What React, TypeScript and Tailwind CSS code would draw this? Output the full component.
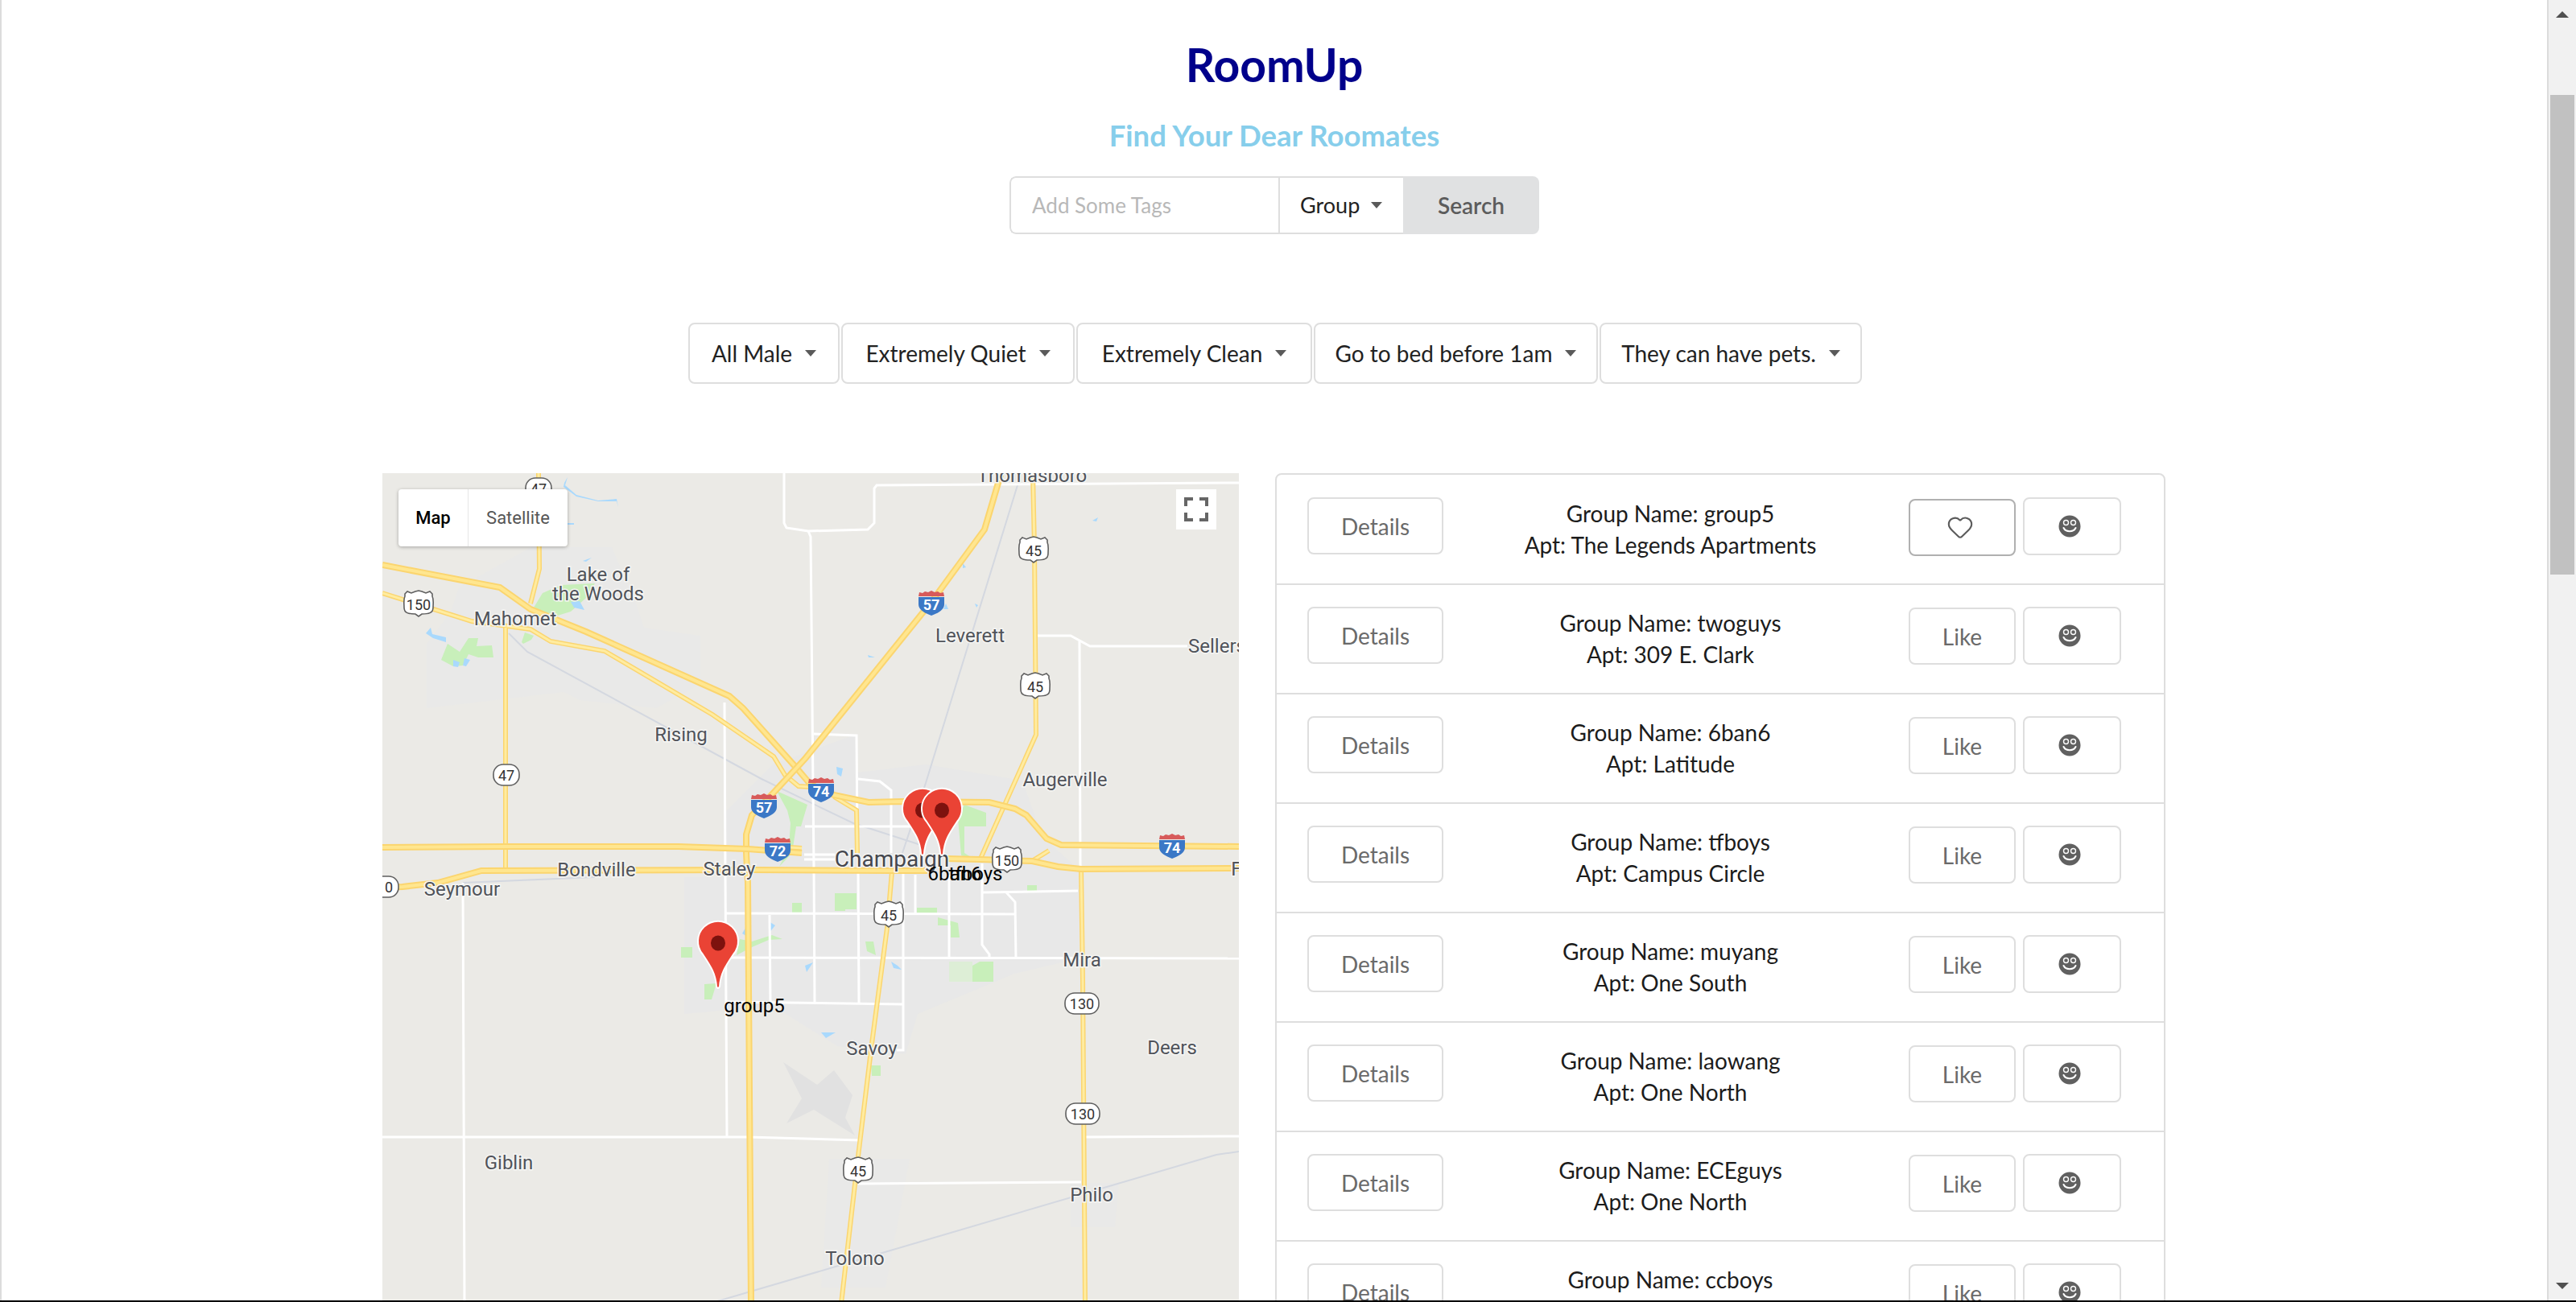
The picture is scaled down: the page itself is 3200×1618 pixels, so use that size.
import { Heart } from 'lucide-react';

const groups = [
  { name: 'group5', apt: 'The Legends Apartments' },
  { name: 'twoguys', apt: '309 E. Clark' },
  { name: '6ban6', apt: 'Latitude' },
  { name: 'tfboys', apt: 'Campus Circle' },
  { name: 'muyang', apt: 'One South' },
  { name: 'laowang', apt: 'One North' },
  { name: 'ECEguys', apt: 'One North' },
  { name: 'ccboys', apt: '' },
];

const filters = ['All Male', 'Extremely Quiet', 'Extremely Clean', 'Go to bed before 1am', 'They can have pets.'];
const filterWidths = ['w-[188px]', 'w-[290px]', 'w-[293px]', 'w-[353px]', 'w-[326px]'];

// roads are in page coordinates, the svg viewBox starts at the map corner
const highways = [
  'M475 702 L621 730 L659 757 L728 785 L906 865 L923 880 L990 955 L1007 975 L1036 988 L1079 997 L1121 996 L1229 997 L1261 1005 L1275 1013 L1300 1042 L1318 1050 L1539 1052',
  'M1243 590 L1223 658 L1157 748 L1000 943 L961 985 L934 1013 L927 1037 L927 1060 L928 1080 L929 1097 L933 1620',
  'M475 1053 L628 1052 L843 1052 L929 1055 L996 1060',
  'M475 1103 L500 1102 L544 1097 L598 1082 L934 1081 L1106 1082 L1152 1082',
  'M1175 1067 L1217 1068 L1282 1070 L1314 1077 L1343 1080 L1539 1079',
];

const smallRoads = [
  'M475 737 L586 772 L659 782 L684 797 L751 809 L885 888 L961 940 L975 963 L992 977 L1007 978',
  'M1036 990 L1064 1007 L1065 1060',
  'M669 588 L670 707 L659 750',
  'M628 780 L628 1079',
  'M1283 588 L1285 680 L1287 913 L1218 1067',
  'M1108 1083 L1102 1153 L1083 1297 L1066 1437 L1045 1620',
  'M1343 1080 L1345 1217 L1348 1620',
  'M1282 1070 L1303 1057',
  'M996 1054 L966 1052',
];

const whiteRoads = [
  'M1539 600 L1089 603 L1086 607 L1086 650 L1078 658 L1004 660 L977 656 L974 650 L974 588',
  'M1004 660 L1007 667 L1011 1080 L1012 1248',
  'M900 873 L901 1087 L903 1413',
  'M475 1413 L929 1413 L1068 1417',
  'M1348 1413 L1539 1412',
  'M575 1097 L577 1620',
  'M902 1135 L1261 1136',
  'M908 1190 L1539 1191',
  'M902 1245 L1121 1248',
  'M1066 1083 L1067 1248',
  'M1122 1083 L1122 1305 L1114 1305',
  'M1179 1087 L1179 1192',
  'M1220 1073 L1220 1174 L1229 1186 L1229 1192',
  'M1220 1109 L1339 1107',
  'M1250 1109 L1261 1121 L1262 1192',
  'M956 1137 L957 1245',
  'M1289 790 L1330 790 L1354 803 L1475 803',
  'M1341 797 L1342 1077',
  'M1066 1471 L1343 1469',
  'M1011 912 L1064 914 L1065 1040',
  'M1066 968 L1093 971 L1107 982 L1107 1060',
  'M1000 1027 L1143 1027',
  'M999 1062 L1037 1062',
  'M999 1068 L1037 1068',
  'M1137 1087 L1137 1137',
];

const rails = [
  'M632 787 L655 810 L946 968 L1060 1023 L1150 1052',
  'M1264 603 L1150 973 L1121 1060',
  'M881 1620 L1038 1574 L1511 1435 L1539 1431',
  'M575 1097 L739 1090',
];

const faintUrban = [
  'M660 680 L760 680 L790 750 L800 780 L870 790 L870 850 L815 880 L720 870 L700 860 L530 880 L530 800 L560 760 L570 730Z',
  'M1030 1440 L1130 1440 L1100 1600 L1020 1600Z',
  'M1330 1470 L1390 1470 L1385 1525 L1330 1525Z',
];

const cityArea = 'M960 950 L1065 912 L1065 960 L1150 950 L1270 970 L1295 1040 L1345 1085 L1345 1190 L1260 1210 L1140 1260 L1125 1310 L1040 1300 L960 1250 L850 1260 L850 1090 L900 1090 L900 1010Z';

const greens = [
  'M556 800 L571 810 L582 793 L594 793 L592 803 L611 802 L613 817 L594 817 L582 813 L575 827 L563 828 L548 820Z',
  'M674 737 L697 727 L739 725 L728 743 L709 760 L686 767 L663 755Z',
  'M648 798 L652 786 L663 790 L660 795 L650 800Z',
  'M965 983 L1003 1000 L995 1027 L989 1027 L984 1060 L968 1077 L980 1053 L982 1023 L978 1007Z',
  'M1190 1017 L1198 1000 L1225 1010 L1225 1027 L1198 1027 L1198 1060 L1209 1067 L1194 1063Z',
  'M1037 1110 L1064 1110 L1064 1130 L1050 1130 L1050 1132 L1037 1132Z',
  'M984 1122 L996 1122 L996 1135 L984 1135Z',
  'M1139 1128 L1164 1128 L1164 1137 L1139 1137Z',
  'M1165 1140 L1190 1147 L1192 1165 L1181 1165 L1181 1150 L1165 1150Z',
  'M1208 1200 L1217 1195 L1234 1195 L1234 1220 L1208 1220Z',
  'M1276 1100 L1288 1100 L1288 1107 L1276 1107Z',
  'M846 1177 L860 1177 L860 1190 L846 1190Z',
  'M875 1223 L890 1222 L884 1242 L875 1242Z',
  'M1075 1170 L1085 1170 L1088 1187 L1077 1182Z',
  'M1082 1324 L1094 1324 L1094 1337 L1083 1337Z',
  'M955 1168 L934 1177 L915 1187 L919 1167 L934 1170 L959 1162 L972 1167Z',
];

const water = [
  'M529 787 L535 780 L537 788 L554 792 L554 798 L538 793Z',
  'M563 820 L571 823 L569 829 L563 828Z',
  'M577 818 L584 820 L579 828 L575 827Z',
  'M709 748 L720 747 L726 758 L713 755Z',
  'M701 600 L705 593 L702 603 L716 615 L743 622 L766 620 L768 630 L766 623 L743 623 L716 617 L700 605Z',
  'M705 650 L713 650 L713 652 L705 652Z',
  'M724 697 L735 693 L728 698Z',
  'M1357 647 L1364 643 L1362 648Z',
  'M1078 814 L1087 817 L1079 817Z',
  'M1196 700 L1200 705 L1196 706Z',
  'M1175 750 L1178 757 L1172 757Z',
  'M1211 750 L1215 752 L1213 755Z',
  'M1039 953 L1047 955 L1045 965 L1040 962Z',
  'M955 1145 L963 1150 L955 1160Z',
  'M1020 1283 L1038 1283 L1026 1290Z',
  'M1107 1195 L1115 1200 L1120 1205 L1110 1203Z',
  'M922 1160 L928 1150 L930 1165Z',
  'M1000 1200 L1010 1196 L1002 1208Z',
];

const places = [
  { t: 'Lake of', x: 743, y: 722 },
  { t: 'the Woods', x: 743, y: 746 },
  { t: 'Mahomet', x: 640, y: 777 },
  { t: 'Rising', x: 846, y: 921 },
  { t: 'Thomasboro', x: 1282, y: 599 },
  { t: 'Leverett', x: 1205, y: 798 },
  { t: 'Sellers', x: 1512, y: 811 },
  { t: 'Augerville', x: 1323, y: 977 },
  { t: 'Staley', x: 906, y: 1088 },
  { t: 'Bondville', x: 741, y: 1089 },
  { t: 'Seymour', x: 574, y: 1113 },
  { t: 'Mira', x: 1344, y: 1201 },
  { t: 'Savoy', x: 1083, y: 1311 },
  { t: 'Deers', x: 1456, y: 1310 },
  { t: 'Philo', x: 1356, y: 1493 },
  { t: 'Giblin', x: 632, y: 1453 },
  { t: 'Tolono', x: 1062, y: 1572 },
  { t: 'F', x: 1536, y: 1088 },
];

function Interstate({ x, y, n }: { x: number; y: number; n: string }) {
  return (
    <g transform={`translate(${x} ${y})`}>
      <path d="M-16 -10 L-15 -15 L-11 -14 L-8 -16 L-4 -15 L0 -17 L4 -15 L8 -16 L11 -14 L15 -15 L16 -10Z" fill="#d75a5a" />
      <path d="M-16 -9 L16 -9 L16 0 C16 7 8 11 0 14 C-8 11 -16 7 -16 0Z" fill="#3b78c6" />
      <text x="0" y="7" textAnchor="middle" fontFamily="Roboto, sans-serif" fontWeight="700" fontSize="18" fill="#fff">{n}</text>
    </g>
  );
}

function UsShield({ x, y, n }: { x: number; y: number; n: string }) {
  return (
    <g transform={`translate(${x} ${y})`}>
      <path d="M-17 -14 L-14 -17 L-9 -15 L-4 -17 L0 -18 L4 -17 L9 -15 L14 -17 L17 -14 L17 -11 C19 -7 18 -2 18 3 C18 10 12 11 4 11 L0 14 L-4 11 C-12 11 -18 10 -18 3 C-18 -2 -19 -7 -17 -11Z" fill="#fff" stroke="#5f5f5f" strokeWidth="1.6" />
      <text x="0" y="6" textAnchor="middle" fontFamily="Roboto, sans-serif" fontSize="18" fill="#333">{n}</text>
    </g>
  );
}

function StateShield({ x, y, n, w }: { x: number; y: number; n: string; w: number }) {
  return (
    <g transform={`translate(${x} ${y})`}>
      <rect x={-w / 2} y="-13" width={w} height="26" rx="12" fill="#fff" stroke="#5f5f5f" strokeWidth="1.6" />
      <text x="0" y="7" textAnchor="middle" fontFamily="Roboto, sans-serif" fontSize="18" fill="#333">{n}</text>
    </g>
  );
}

function Pin({ x, y }: { x: number; y: number }) {
  return (
    <g transform={`translate(${x} ${y})`}>
      <path d="M-2 -2 C-3 -18 -9 -27 -19 -42 A25 25 0 1 1 19 -42 C9 -27 3 -18 2 -2 Q0 2 -2 -2Z" fill="#ea4335" stroke="#fff" strokeWidth="2" />
      <ellipse cx="0" cy="-56" rx="9" ry="9.5" fill="#7d120e" />
    </g>
  );
}

function MapDrawing() {
  return (
    <svg viewBox="475 588 1064 1028" className="block w-full h-full">
      <rect x="475" y="588" width="1064" height="1028" fill="#ebeae6" />
      {faintUrban.map((d) => (
        <path key={d} d={d} fill="#e9e9e8" />
      ))}
      <path d={cityArea} fill="#e8e8e8" />
      <path d="M973 1320 L1015 1348 L1036 1330 L1059 1361 L1050 1389 L1062 1411 L1011 1379 L977 1396 L996 1365Z" fill="#e1e1e1" />
      {greens.map((d) => (
        <path key={d} d={d} fill="#c8efba" />
      ))}
      <path d="M1179 1195 L1208 1195 L1208 1220 L1179 1220Z" fill="#ddeed6" />
      {water.map((d) => (
        <path key={d} d={d} fill="#a9d9fd" />
      ))}
      {rails.map((d) => (
        <path key={d} d={d} fill="none" stroke="#d4d8e0" strokeWidth="2" />
      ))}
      {whiteRoads.map((d) => (
        <path key={d} d={d} fill="none" stroke="#fff" strokeWidth="3" />
      ))}
      {smallRoads.map((d) => (
        <g key={d}>
          <path d={d} fill="none" stroke="#fbd56f" strokeWidth="6" />
          <path d={d} fill="none" stroke="#ffeca0" strokeWidth="3" />
        </g>
      ))}
      {highways.map((d) => (
        <g key={d}>
          <path d={d} fill="none" stroke="#fbd56f" strokeWidth="8" />
          <path d={d} fill="none" stroke="#ffe68f" strokeWidth="4" />
        </g>
      ))}

      {places.map((p) => (
        <text key={p.t} x={p.x} y={p.y} textAnchor="middle" fontFamily="Roboto, sans-serif" fontSize="24" fill="#50535a" stroke="#f5f5f3" strokeWidth="3" paintOrder="stroke">
          {p.t}
        </text>
      ))}

      <StateShield x={669} y={607} n="47" w={32} />
      <StateShield x={629} y={963} n="47" w={32} />
      <StateShield x={1344} y={1247} n="130" w={42} />
      <StateShield x={1345} y={1384} n="130" w={42} />
      <StateShield x={478} y={1102} n="10" w={34} />
      <UsShield x={520} y={752} n="150" />
      <UsShield x={1284} y={685} n="45" />
      <UsShield x={1286} y={854} n="45" />
      <UsShield x={1251} y={1070} n="150" />
      <UsShield x={1104} y={1138} n="45" />
      <UsShield x={1066} y={1456} n="45" />
      <Interstate x={949} y={1003} n="57" />
      <Interstate x={1020} y={983} n="74" />
      <Interstate x={966} y={1057} n="72" />
      <Interstate x={1157} y={751} n="57" />
      <Interstate x={1456} y={1053} n="74" />

      <text x={1108} y={1077} textAnchor="middle" fontFamily="Roboto, sans-serif" fontSize="28" fill="#45474e" stroke="#f5f5f3" strokeWidth="3" paintOrder="stroke">Champaign</text>

      <Pin x={1146} y={1063} />
      <Pin x={1170} y={1063} />
      <Pin x={892} y={1228} />
      <text x={1186} y={1094} textAnchor="middle" fontFamily="Roboto, sans-serif" fontSize="24" fill="#000">6ban6</text>
      <text x={1212} y={1094} textAnchor="middle" fontFamily="Roboto, sans-serif" fontSize="24" fill="#000">tfboys</text>
      <text x={937} y={1258} textAnchor="middle" fontFamily="Roboto, sans-serif" fontSize="24" fill="#000">group5</text>
    </svg>
  );
}

function Smiley() {
  return (
    <svg width="28" height="28" viewBox="0 0 28 28">
      <circle cx="14" cy="14" r="13.5" fill="#606060" />
      <circle cx="9.5" cy="9.5" r="3" fill="none" stroke="#fff" strokeWidth="1.4" />
      <circle cx="18.5" cy="9.5" r="3" fill="none" stroke="#fff" strokeWidth="1.4" />
      <path d="M6.5 16 C9 21.5 19 21.5 21.5 16" fill="none" stroke="#fff" strokeWidth="2" strokeLinecap="round" />
    </svg>
  );
}

function Caret() {
  return <span className="inline-block w-0 h-0 border-x-[7px] border-x-transparent border-t-[8px] border-t-[#5a5a5a]" />;
}

function GroupRow({ name, apt, first }: { name: string; apt: string; first: boolean }) {
  return (
    <div className={`flex items-start pl-[38px] pr-[53px] ${first ? 'h-[135px] pt-[28px]' : 'h-[136px] pt-[27px] border-t-2 border-[#dedede]'}`}>
      <button className="w-[169px] h-[71px] border-2 border-[#dedede] rounded-lg text-[28px] text-[#6a6a6a] bg-white">Details</button>
      <div className="flex-1 pr-[14px] pt-[1px] text-center text-[28px] leading-[39px] text-[#1c1c1c]">
        <p>Group Name: {name}</p>
        <p>{apt ? `Apt: ${apt}` : ''}</p>
      </div>
      <button className={`w-[133px] h-[71px] rounded-lg text-[28px] text-[#6a6a6a] bg-white flex items-center justify-center border-2 ${first ? 'mt-[2px] border-[#b0b0b0]' : 'mt-[1px] border-[#dedede]'}`}>
        {first ? <Heart size={34} strokeWidth={1.5} className="text-[#5c5c5c] -ml-[6px] -mt-[1px]" /> : 'Like'}
      </button>
      <button className="ml-[9px] w-[122px] h-[72px] border-2 border-[#dedede] rounded-lg bg-white flex items-center justify-center pr-[6px]">
        <Smiley />
      </button>
    </div>
  );
}

function Scrollbar() {
  return (
    <div className="w-[36px] h-full shrink-0 flex flex-col items-center bg-[#f1f1f1] border-l-2 border-[#dcdcdc]">
      <div className="mt-[14px] w-0 h-0 border-x-[8px] border-x-transparent border-b-[8px] border-b-[#505050]" />
      <div className="mt-[96px] w-[30px] h-[596px] bg-[#c1c1c1]" />
      <div className="mt-auto mb-[14px] w-0 h-0 border-x-[8px] border-x-transparent border-t-[8px] border-t-[#505050]" />
    </div>
  );
}

export default function App() {
  return (
    <div className="h-[1618px] overflow-hidden flex flex-col bg-white font-['Lato',sans-serif]">
      <div className="flex-1 min-h-0 flex">
        <main className="flex-1 min-w-0 overflow-hidden border-l-2 border-[#dcdcdc]">
          <h1 className="mt-[42px] text-center text-[57px] leading-[76px] font-bold text-[#00008b]">RoomUp</h1>
          <h2 className="mt-[28px] text-center text-[36.5px] leading-[44px] font-bold text-[#87ceeb]">Find Your Dear Roomates</h2>

          <div className="mt-[29px] flex justify-center">
            <div className="flex h-[72px] w-[658px] text-[27px] rounded-lg overflow-hidden">
              <input
                className="w-[334px] border-2 border-r-0 border-[#dedede] rounded-l-lg pl-[26px] text-[26px] outline-none placeholder:text-[#b8b8b8]"
                placeholder="Add Some Tags"
              />
              <div className="w-[155px] border-2 border-r-0 border-[#dedede] flex items-center pl-[25px] gap-[14px] text-[#222]">
                Group
                <Caret />
              </div>
              <button className="flex-1 bg-[#e0e1e2] text-[28px] text-[#5c5c5c] font-semibold">Search</button>
            </div>
          </div>

          <div className="mt-[110px] flex justify-center gap-[2px] pl-[2px]">
            {filters.map((f, i) => (
              <div key={f} className={`${filterWidths[i]} h-[76px] border-2 border-[#dedede] rounded-lg flex items-center justify-center gap-[16px] text-[28px] text-[#222]`}>
                {f}
                <Caret />
              </div>
            ))}
          </div>

          <div className="mt-[111px] flex items-start pl-[473px]">
            <div className="relative w-[1064px] h-[1028px] shrink-0">
              <MapDrawing />
              <div className="absolute left-[20px] top-[20px] flex w-[210px] h-[71px] bg-white rounded-[4px] shadow-[0_1px_4px_rgba(0,0,0,0.3)] font-['Roboto',sans-serif] text-[22px] items-center">
                <span className="w-[87px] h-full flex items-center justify-center text-black font-medium border-r border-[#e6e6e6]">Map</span>
                <span className="flex-1 text-center text-[#565656]">Satellite</span>
              </div>
              <div className="absolute right-[28px] top-[20px] w-[50px] h-[50px] bg-white flex items-center justify-center">
                <svg width="30" height="30" viewBox="0 0 30 30" fill="none" stroke="#666" strokeWidth="4">
                  <path d="M2 11 V2 H11 M19 2 H28 V11 M2 19 V28 H11 M28 19 V28 H19" />
                </svg>
              </div>
            </div>
            <div className="ml-[45px] w-[1106px] shrink-0 border-2 border-[#dedede] rounded-lg">
              {groups.map((g, i) => (
                <GroupRow key={g.name} name={g.name} apt={g.apt} first={i === 0} />
              ))}
            </div>
          </div>
        </main>
        <Scrollbar />
      </div>
      <div className="h-[2px] bg-black shrink-0" />
    </div>
  );
}
